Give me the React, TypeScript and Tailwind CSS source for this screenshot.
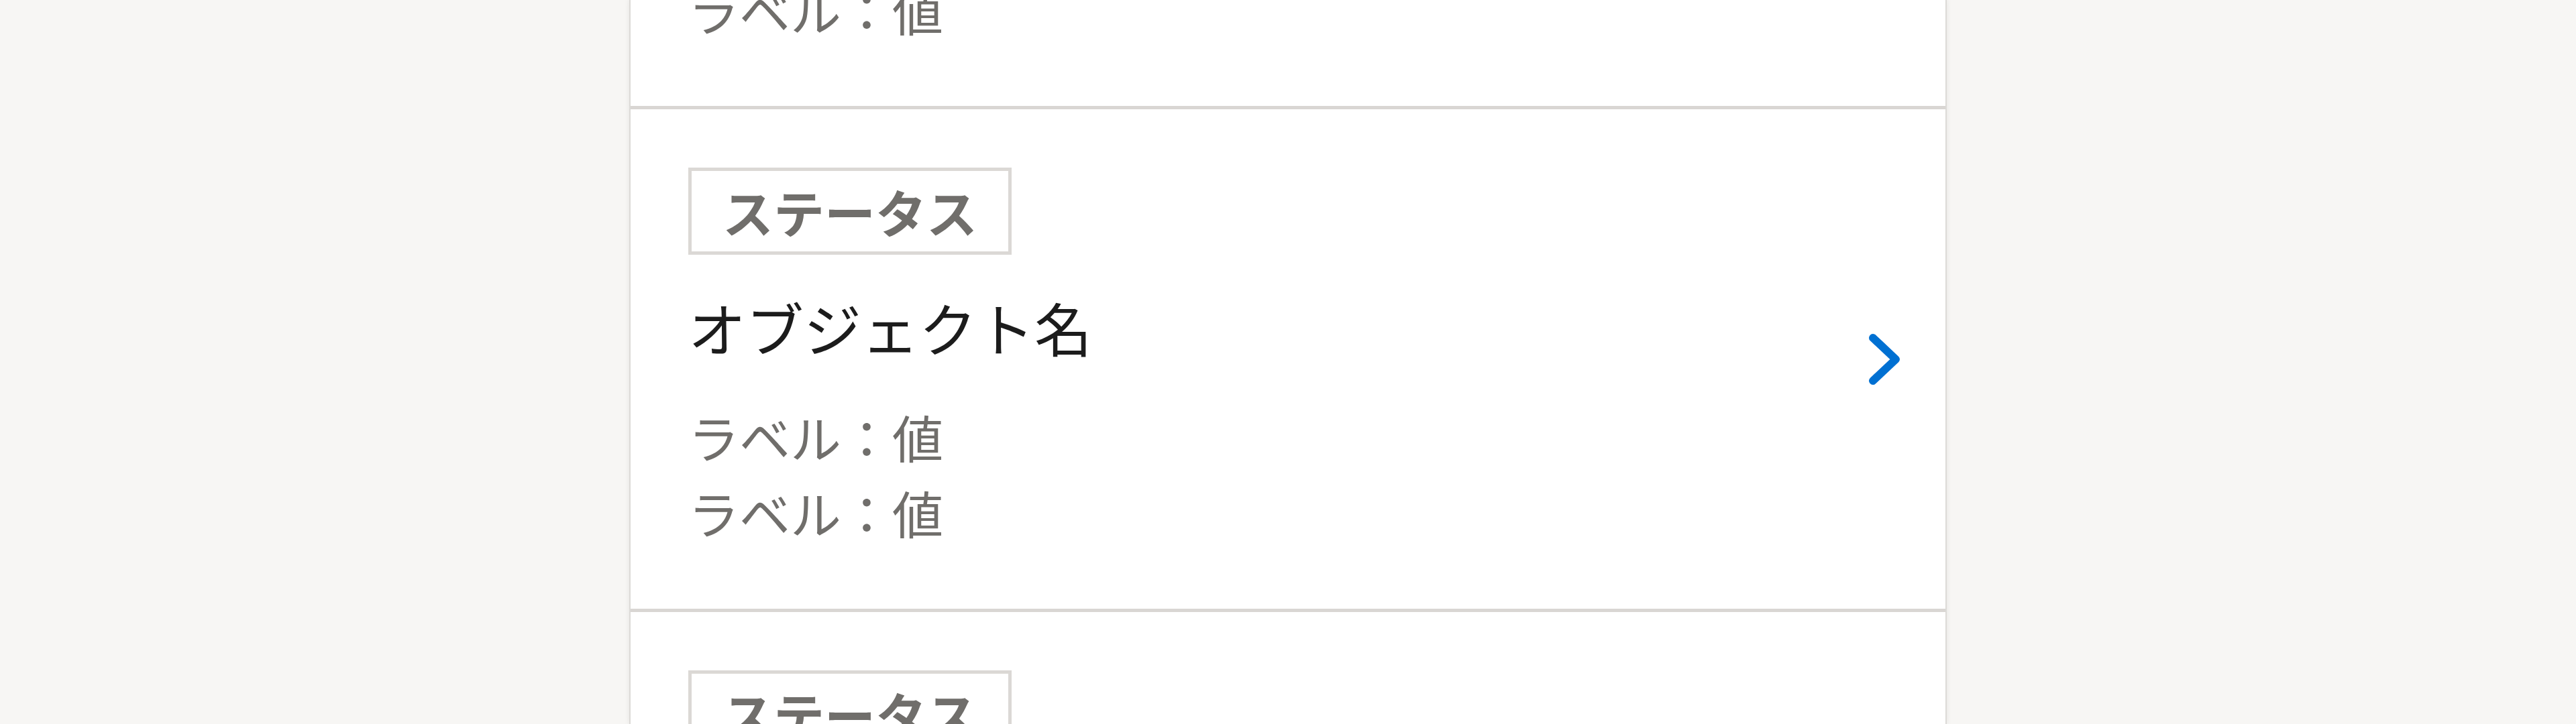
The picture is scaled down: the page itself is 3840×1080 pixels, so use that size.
const items = [
    { status: "ステータス", name: "オブジェクト名", fields: ["ラベル：値", "ラベル：値"] },
    { status: "ステータス", name: "オブジェクト名", fields: ["ラベル：値", "ラベル：値"] },
    { status: "ステータス", name: "オブジェクト名", fields: ["ラベル：値", "ラベル：値"] },
];

const ChevronRight = () => (
    <svg width="60" height="96" viewBox="0 0 60 96" fill="none" className="shrink-0">
        <path
            d="M12 16 L46 48 L12 80"
            stroke="#0070d2"
            strokeWidth="12"
            strokeLinecap="round"
            strokeLinejoin="round"
        />
    </svg>
);

const App = () => {
    return (
        <div
            className="h-[1080px] w-full overflow-hidden bg-[#f7f6f4]"
            style={{ fontFamily: '"Noto Sans CJK JP", "Noto Sans", sans-serif' }}
        >
            <div className="mx-auto w-[1964px] h-full overflow-hidden bg-white border-x-2 border-[#dcdad7] shadow-[0_0_8px_rgba(0,0,0,0.08)]">
                {/* list is scrolled: first card mostly above the fold */}
                <ul className="-mt-[587px]">
                    {items.map((item, i) => (
                        <li
                            key={i}
                            className="flex items-center justify-between pl-[86px] pr-[60px] py-[87px] border-b-[5px] border-[#d9d6d3]"
                        >
                            <div className="flex flex-col items-start">
                                <span className="h-[130px] px-[46px] border-[5px] border-[#dbd8d5] text-[76px] leading-[120px] font-bold text-[#706e6b]">
                                    {item.status}
                                </span>
                                <h2 className="mt-[43px] text-[86px] leading-[129px] font-normal text-[#1c1c1c]">
                                    {item.name}
                                </h2>
                                <div className="mt-[43px] text-[76px] leading-[113px] text-[#706e6b]">
                                    {item.fields.map((f, j) => (
                                        <p key={j}>{f}</p>
                                    ))}
                                </div>
                            </div>
                            <ChevronRight />
                        </li>
                    ))}
                </ul>
            </div>
        </div>
    );
};

export default App;
